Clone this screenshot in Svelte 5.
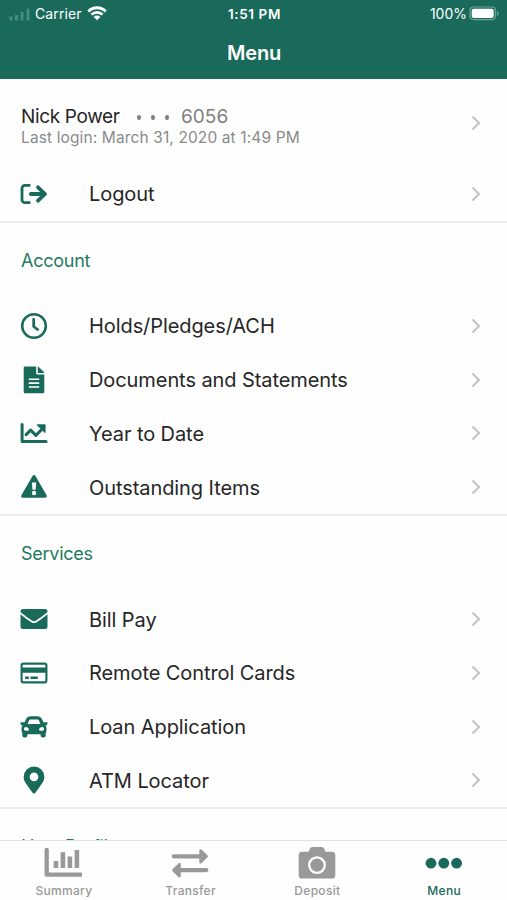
<script>
    const sections = [
        {
            title: "Account",
            items: [
                { icon: "clock", label: "Holds/Pledges/ACH" },
                { icon: "file", label: "Documents and Statements" },
                { icon: "chart", label: "Year to Date" },
                { icon: "warning", label: "Outstanding Items" }
            ]
        },
        {
            title: "Services",
            items: [
                { icon: "mail", label: "Bill Pay" },
                { icon: "card", label: "Remote Control Cards" },
                { icon: "car", label: "Loan Application" },
                { icon: "pin", label: "ATM Locator" }
            ]
        },
        { title: "User Profile", items: [] }
    ];

    const tabs = [
        { icon: "summary", label: "Summary" },
        { icon: "transfer", label: "Transfer" },
        { icon: "camera", label: "Deposit" },
        { icon: "dots", label: "Menu" }
    ];

    let active = $state("Menu");
</script>

{#snippet chevron()}
    <svg class="Chevron" viewBox="0 0 10 16"><path d="M1.5 1.5L8 8L1.5 14.5" /></svg>
{/snippet}

{#snippet icon(name)}
    <svg class="Icon" viewBox="0 0 28 28">
        {#if name === "logout"}
            <path class="line" stroke-width="2.8" d="M9.3 5.3H5a3 3 0 0 0-3 3v11.4a3 3 0 0 0 3 3h4.3" />
            <path class="line" stroke-width="3.8" d="M10.8 14H24M18 7.3L25 14l-7 6.7" />
        {:else if name === "clock"}
            <circle class="line" stroke-width="2.5" cx="14" cy="14" r="11.8" />
            <path class="line" stroke-width="2.8" stroke-linejoin="miter" d="M13.7 7.5v7l3.9 3" />
        {:else if name === "file"}
            <path d="M5 .5h11.2v6.8a1.3 1.3 0 0 0 1.3 1.3h6.8V26a1.3 1.3 0 0 1-1.3 1.3H5A1.3 1.3 0 0 1 3.7 26V1.8A1.3 1.3 0 0 1 5 .5z" />
            <path d="M17.8.5c.4 0 .7.2.9.4l5.2 5.2c.3.3.4.5.4.9h-6.5z" />
            <path class="cut" stroke-width="1.6" d="M8.8 13.2h10.4M8.8 17.1h10.4M8.8 21h10.4" />
        {:else if name === "chart"}
            <path class="line" stroke-width="3" stroke-linejoin="miter" d="M2.1 5.4v17.1h24" />
            <path class="line" stroke-width="3.1" stroke-linecap="butt" stroke-linejoin="miter" d="M6.1 15.6l4.5-4.5 5.3 5.2 6.8-6.8" />
            <path d="M17.4 5.2h7.4c.5 0 .8.3.8.8v7.3c0 .6-.6.8-1 .4l-7.6-7.4c-.4-.5-.2-1.1.4-1.1z" />
        {:else if name === "warning"}
            <path d="M15.5 2.9l11.1 19.3c.7 1.2-.2 2.6-1.5 2.6H2.9c-1.4 0-2.2-1.4-1.5-2.6L12.5 2.9c.7-1.2 2.3-1.2 3 0z" />
            <path class="hole" d="M11.9 9.4h4.3l-.6 7.4h-3.1z" />
            <circle class="hole" cx="14" cy="20" r="2.2" />
        {:else if name === "mail"}
            <path d="M3 3.9h22a2.5 2.5 0 0 1 2.5 2.5V7c-2.4 2.1-6.3 5-9.4 7.1-1.1.8-2.8 2.2-4.1 2.2s-3-1.4-4.1-2.2C6.8 12 2.9 9.1.5 7v-.6A2.5 2.5 0 0 1 3 3.9z" />
            <path d="M.5 9.2c2.3 2 5.6 4.4 8.6 6.5 1.3.9 3 2.4 4.9 2.4s3.6-1.5 4.9-2.4c3-2.1 6.3-4.5 8.6-6.5v12.3a2.5 2.5 0 0 1-2.5 2.5H3a2.5 2.5 0 0 1-2.5-2.5z" />
        {:else if name === "card"}
            <rect class="line" stroke-width="2.1" x="1.6" y="4.6" width="24.8" height="18.8" rx="1.8" />
            <path d="M1.5 8.6h25v5.2h-25zM5.2 17.4h3.6v2.7H5.2zM10.5 17.4h7.3v2.7h-7.3z" />
        {:else if name === "car"}
            <path fill-rule="evenodd" d="M26.9 9.3h-3.5l-1.1-2.6C21.3 4.2 19.1 3.3 16.9 3.3h-5.8c-2.3 0-4.4 1-5.4 3.4L4.6 9.3H1.1c-.5 0-.8.4-.7.8l.4 1.5c.1.4.4.6.7.6h1.2c-.8.7-1.2 1.6-1.2 2.7v2.7c0 .9.3 1.7.8 2.3v2.7c0 1 .8 1.8 1.8 1.8h1.5c1 0 1.8-.8 1.8-1.8v-1.3h13.2v1.3c0 1 .8 1.8 1.8 1.8h1.5c1 0 1.8-.8 1.8-1.8v-2.7c.5-.6.8-1.4.8-2.3v-2.7c0-1.1-.5-2-1.2-2.7h1.2c.3 0 .6-.2.7-.6l.4-1.5c.1-.4-.2-.8-.7-.8zM8.8 8c.4-1 1.3-1.4 2.3-1.4h5.8c1 0 1.9.4 2.3 1.4l1.2 3H7.6zM6 17.8c-1.2 0-2-.8-2-1.9s.8-1.8 2-1.8 3 1.6 3 2.7S7.2 17.8 6 17.8zm16 0c-1.2 0-3 .1-3-1s1.800-2.700 3-2.700 2 .7 2 1.800-.8 1.900-2 1.900z" />
        {:else if name === "pin"}
            <path fill-rule="evenodd" d="M12.8 26.9C5.1 16.2 3.7 15.1 3.7 10.9a10.3 10.3 0 0 1 20.6 0c0 4.2-1.4 5.3-9.1 16-.6.8-1.8.8-2.4 0zM14 15.2a4.3 4.3 0 1 0 0-8.6 4.3 4.3 0 0 0 0 8.6z" />
        {/if}
    </svg>
{/snippet}

{#snippet tabIcon(name)}
    <svg class="TabIcon" viewBox="0 0 38 34">
        {#if name === "summary"}
            <path class="line" stroke-width="4.3" stroke-linecap="butt" d="M2.7 4v24.7h34.4" />
            <path class="bar" stroke-width="4.6" d="M12 15v7M18.9 6.3V22M25.9 10.6V22M32.9 4v18" />
        {:else if name === "transfer"}
            <path class="line" stroke-width="4.3" d="M2.8 10.3H30M8 24.1h27.3" />
            <path d="M28.3 4.5c0-1.4 1.5-1.7 2.4-.8l5.8 5.6c.6.6.6 1.4 0 2l-5.8 5.7c-.9.9-2.4.5-2.4-.8zM9.8 18.4c0-1.4-1.5-1.7-2.4-.8l-5.8 5.6c-.6.6-.6 1.4 0 2l5.8 5.7c.9.9 2.4.5 2.4-.8z" />
        {:else if name === "camera"}
            <path d="M.7 9.2a3.4 3.4 0 0 1 3.4-3.4h6.5l.9-2.4a3.5 3.5 0 0 1 3.3-2.3h8.4a3.5 3.5 0 0 1 3.3 2.3l.9 2.4h6.5a3.4 3.4 0 0 1 3.4 3.4v20a3.4 3.4 0 0 1-3.4 3.4H4.100a3.400 3.400 0 0 1-3.400-3.400z" />
            <circle class="ring" stroke-width="2.3" cx="19" cy="19.1" r="7.8" />
        {:else if name === "dots"}
            <circle cx="6" cy="17.2" r="5.4" />
            <circle cx="18.8" cy="17.2" r="5.4" />
            <circle cx="31.6" cy="17.2" r="5.4" />
        {/if}
    </svg>
{/snippet}

<div class="App">
    <header class="Header">
        <div class="StatusBar">
            <div class="StatusBar__Left">
                <svg class="Signal" viewBox="0 0 22 14">
                    <path d="M.5 9.5h3v4h-3zM6 8h3v5.5H6zM11.5 5h3v8.5h-3zM17.5 1.5h3v12h-3z" />
                </svg>
                <span class="Carrier">Carrier</span>
                <svg class="Wifi" viewBox="0 0 20 15">
                    <path d="M1.3 5.4C6.2.5 13.8.5 18.7 5.4M4.5 8.6c3.2-3.1 7.8-3.1 11 0" />
                    <path class="Wifi__Dot" d="M6.7 10.9c1.9-1.8 4.7-1.8 6.6 0L10 14.2z" />
                </svg>
            </div>
            <span class="Time">1:51 PM</span>
            <div class="StatusBar__Right">
                <span class="Percent">100%</span>
                <svg class="Battery" viewBox="0 0 31 15">
                    <rect class="Battery__Case" x="1" y="1" width="25.5" height="12.6" rx="3.5" />
                    <rect x="2.7" y="2.7" width="22" height="9.2" rx="2" />
                    <path class="Battery__Tip" d="M28 5c2.2.8 2.2 3.9 0 4.7z" />
                </svg>
            </div>
        </div>
        <h1 class="Header__Title">Menu</h1>
    </header>

    <main class="Content">
        <div class="Profile">
            <div class="Profile__Text">
                <div class="Profile__Name">
                    <span>Nick Power</span>
                    <span class="Mask"><i></i><i></i><i></i></span>
                    <span class="Profile__Number">6056</span>
                </div>
                <div class="Profile__Login">Last login: March 31, 2020 at 1:49 PM</div>
            </div>
            {@render chevron()}
        </div>
        <div class="Row Row--last">
            {@render icon("logout")}
            <span class="Row__Label">Logout</span>
            {@render chevron()}
        </div>

        {#each sections as section}
            <section class="Section">
                <h2 class="Section__Title">{section.title}</h2>
                {#each section.items as item}
                    <div class="Row">
                        {@render icon(item.icon)}
                        <span class="Row__Label">{item.label}</span>
                        {@render chevron()}
                    </div>
                {/each}
            </section>
        {/each}
    </main>

    <nav class="TabBar">
        {#each tabs as tab}
            <button class="Tab" class:Tab--active={active === tab.label} onclick={() => active = tab.label}>
                {@render tabIcon(tab.icon)}
                <span class="Tab__Label">{tab.label}</span>
            </button>
        {/each}
    </nav>
</div>

<style>
    :global(body) {
        margin: 0;
        background: white;
    }

    .App {
        --primary: #196a5b;
        display: flex;
        flex-direction: column;
        height: 100vh;
        overflow: hidden;
        font-family: Inter, "Liberation Sans", sans-serif;
        color: #262626;
        background: #fefefe;
    }

    .Header {
        flex: none;
        height: 79px;
        background: var(--primary);
        color: white;
    }

    .StatusBar {
        display: grid;
        grid-template-columns: 1fr auto 1fr;
        align-items: center;
        height: 27px;
        padding: 0 7px 0 9px;
        font-size: 14px;
        line-height: 20px;
    }

    .StatusBar__Left,
    .StatusBar__Right {
        display: flex;
        align-items: center;
    }

    .StatusBar__Right {
        justify-content: flex-end;
    }

    .Signal {
        width: 22px;
        height: 14px;
        fill: #478b7d;
    }

    .Carrier {
        margin: 0 5px 0 4px;
        letter-spacing: 0.1px;
    }

    .Wifi {
        width: 20px;
        height: 15px;
        margin-top: -1px;
        fill: none;
        stroke: white;
        stroke-width: 2.8;
    }

    .Wifi__Dot {
        fill: white;
        stroke: none;
    }

    .Time {
        font-size: 13.5px;
        font-weight: 600;
        letter-spacing: 0.6px;
    }

    .Percent {
        margin-right: 2px;
    }

    .Battery {
        width: 31px;
        height: 15px;
        margin-top: -1px;
        fill: white;
    }

    .Battery__Case {
        fill: none;
        stroke: #6fa399;
        stroke-width: 1.2;
    }

    .Battery__Tip {
        fill: #6fa399;
    }

    .Header__Title {
        margin: 0;
        padding: 13px 0 0 1px;
        font-size: 20px;
        font-weight: 600;
        line-height: 26px;
        letter-spacing: -0.2px;
        text-align: center;
    }

    .Content {
        flex: 1;
        min-height: 0;
        overflow: hidden;
    }

    .Profile {
        display: flex;
        align-items: center;
        justify-content: space-between;
        height: 88.4px;
        padding: 0 26px 0 21px;
        box-sizing: border-box;
    }

    .Profile__Text {
        padding-top: 7px;
    }

    .Profile__Name {
        display: flex;
        align-items: center;
        font-size: 19px;
        line-height: 22px;
        letter-spacing: -0.35px;
    }

    .Profile__Number {
        color: #808080;
        letter-spacing: 0;
    }

    .Profile__Login {
        font-size: 15.5px;
        line-height: 20px;
        letter-spacing: 0.12px;
        color: #8a8a8a;
    }

    .Mask {
        display: flex;
        gap: 9.5px;
        margin: 2px 12px 0 17px;
    }

    .Mask i {
        width: 4.5px;
        height: 4.5px;
        border-radius: 50%;
        background: #808080;
    }

    .Row {
        display: flex;
        align-items: center;
        height: 53.75px;
        padding: 0 26px 0 20px;
    }

    .Row--last {
        height: 53.2px;
        border-bottom: 2px solid #ebebeb;
    }

    .Row__Label {
        flex: 1;
        margin: 1px 0 0 41px;
        font-size: 20px;
        line-height: 28px;
        letter-spacing: -0.08px;
    }

    .Icon {
        width: 28px;
        height: 28px;
        fill: var(--primary);
    }

    .line {
        fill: none;
        stroke: currentColor;
        stroke-linecap: round;
        stroke-linejoin: round;
    }

    .Icon .line {
        stroke: var(--primary);
    }

    .bar {
        stroke: currentColor;
    }

    .cut {
        stroke: white;
    }

    .hole {
        fill: white;
    }

    .Chevron {
        width: 10px;
        height: 16px;
        fill: none;
        stroke: #c2c2c2;
        stroke-width: 2;
    }

    .Section {
        border-bottom: 2px solid #ebebeb;
    }

    .Section__Title {
        margin: 0;
        padding-left: 21px;
        font-size: 18px;
        font-weight: 400;
        line-height: 76.3px;
        letter-spacing: -0.25px;
        color: #1f7a60;
    }

    .TabBar {
        flex: none;
        display: flex;
        height: 60px;
        box-sizing: border-box;
        border-top: 1px solid #e2e2e2;
        background: #fefefe;
    }

    .Tab {
        flex: 1;
        display: flex;
        flex-direction: column;
        align-items: center;
        padding: 5px 0 0;
        border: 0;
        background: none;
        font-family: inherit;
        color: #999999;
        cursor: pointer;
    }

    .Tab--active {
        color: var(--primary);
    }

    .TabIcon {
        width: 38px;
        height: 34px;
        fill: currentColor;
    }

    .ring {
        fill: none;
        stroke: white;
    }

    .Tab__Label {
        margin: 2px 0 0 1px;
        font-size: 12px;
        font-weight: 500;
        line-height: 18px;
        letter-spacing: 0.3px;
    }
</style>
